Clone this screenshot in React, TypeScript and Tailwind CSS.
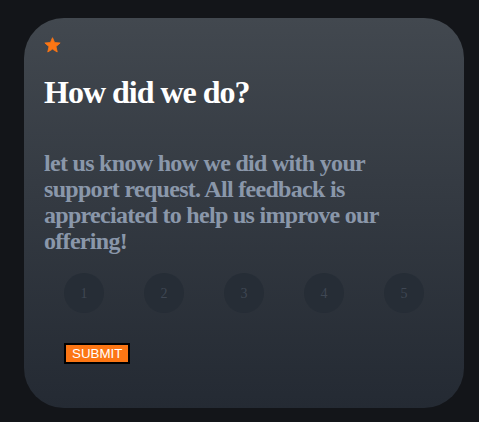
export default function App() {
  const ratings = [1, 2, 3, 4, 5];

  return (
    <div className="min-h-[422px] w-full bg-[#131519] pt-[18px] pl-6">
      <div className="w-[440px] h-[390px] rounded-[40px] bg-gradient-to-b from-[#42484f] to-[#242a33] p-5 font-['Liberation_Serif',serif]">
        {/* star icon */}
        <svg viewBox="0 0 24 23" className="w-[17px] h-[16px] -mt-[1px]" fill="#fc7614" stroke="#fc7614" strokeWidth={1.2} strokeLinejoin="round">
          <polygon points="12,1 15,8 23,8.6 17,13.8 18.8,21.6 12,17.4 5.2,21.6 7,13.8 1,8.6 9,8" />
        </svg>

        <h1 className="mt-[21px] text-[32px] leading-[37px] font-bold tracking-[-1px] text-white">How did we do?</h1>

        <p className="mt-[39px] w-[346px] text-[24px] leading-[26px] font-bold tracking-[-0.7px] text-[#8a97aa]">
          let us know how we did with your support request. All feedback is appreciated to help us improve our offering!
        </p>

        <div className="mt-[19px] flex justify-around">
          {ratings.map((n) => (
            <div
              key={n}
              className="w-10 h-10 rounded-full bg-[#262d36] flex items-center justify-center text-[14px] text-[#3f4753]"
            >
              {n}
            </div>
          ))}
        </div>

        <button className="mt-[30px] ml-5 h-[21px] px-[6px] border-2 border-black bg-[#fc7614] text-white text-[13.33px] leading-[15px] font-['Liberation_Sans',sans-serif]">
          SUBMIT
        </button>
      </div>
    </div>
  );
}
